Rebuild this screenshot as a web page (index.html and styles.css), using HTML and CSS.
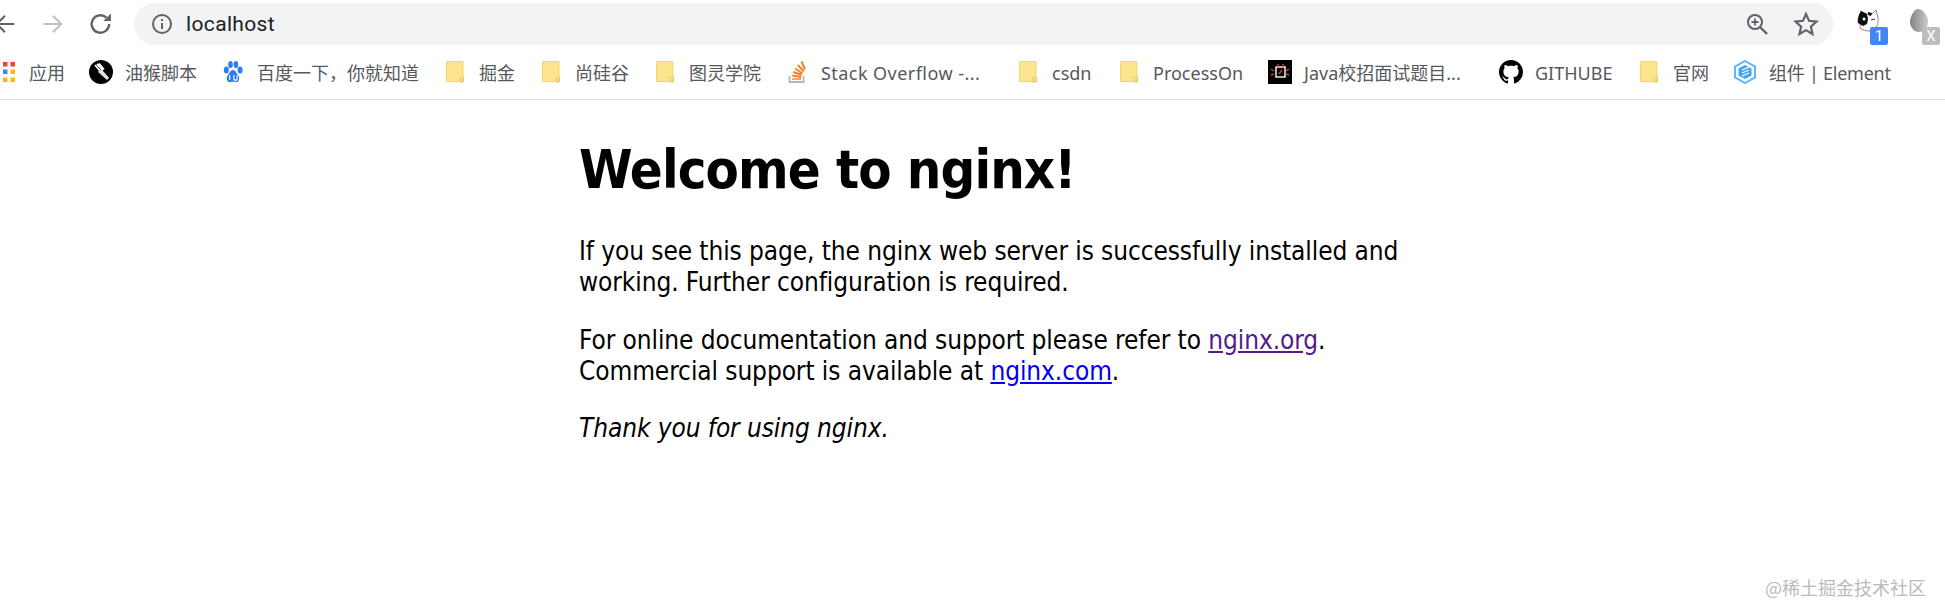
FILE: index.html
```html
<!DOCTYPE html>
<html lang="zh">
<head>
<meta charset="utf-8">
<title>Welcome to nginx!</title>
<link rel="stylesheet" href="styles.css">
</head>
<body>
<header class="chrome">
  <div class="toolbar">
    <svg class="nav nav-back" viewBox="0 0 24 24"><path d="M20 12H5M12 5l-7 7 7 7" fill="none" stroke="#5f6368" stroke-width="1.8"/></svg>
    <svg class="nav nav-forward" viewBox="0 0 24 24"><path d="M4 12h15M12 5l7 7-7 7" fill="none" stroke="#bdc1c6" stroke-width="1.8"/></svg>
    <svg class="nav nav-reload" viewBox="0 0 24 24"><path d="M19 12a7.5 7.5 0 1 1-2.3-5.4" fill="none" stroke="#5f6368" stroke-width="2"/><path d="M20.5 3v6.5H14z" fill="#5f6368"/></svg>
    <div class="omnibox">
      <svg class="info" viewBox="0 0 24 24"><circle cx="12" cy="12" r="9" fill="none" stroke="#5f6368" stroke-width="2"/><path d="M11 11h2v6h-2zM11 7h2v2h-2z" fill="#5f6368"/></svg>
      <span class="url">localhost</span>
      <svg class="zoom" viewBox="0 0 24 24"><circle cx="10" cy="10" r="7" fill="none" stroke="#5f6368" stroke-width="2"/><path d="M15 15l7 7" stroke="#5f6368" stroke-width="2.4"/><path d="M10 6.500v7M6.500 10h7" stroke="#5f6368" stroke-width="1.800"/></svg>
      <svg class="star" viewBox="0 0 24 24"><path d="M12 2.800l2.800 6.300 6.900.7-5.200 4.600 1.500 6.800-6-3.500-6 3.500 1.500-6.800-5.200-4.600 6.900-.7z" fill="none" stroke="#5f6368" stroke-width="2"/></svg>
    </div>
    <div class="ext ext-cat">
      <svg class="ext-icon" viewBox="0 0 24 26"><path d="M5 3l5 3c2-.5 4-.5 6 0l4-4 2 8c1 6-2 13-9 13-3 0-6-1-9-3 1-2 0-4-1-6 0-4 1-8 2-11z" fill="#fff" stroke="#8a8a8a" stroke-width="1"/><path d="M5 3l6 3 1 5-1 5-4 2-5-3c-1-4 1-9 3-12z" fill="#111"/><path d="M12 4l4 1-1 3-3-1z" fill="#111"/><circle cx="8" cy="11" r="1.500" fill="#fff"/><path d="M15 12l4-1" stroke="#333" stroke-width="1"/></svg>
      <span class="badge badge-blue">1</span>
    </div>
    <div class="ext ext-egg">
      <svg class="ext-icon" viewBox="0 0 24 26"><defs><linearGradient id="egg" x1="0" x2="1" y1="0" y2="0"><stop offset="0" stop-color="#7f8584"/><stop offset="1" stop-color="#c9cccb"/></linearGradient></defs><path d="M10 1c5 0 11 8 10 14-1 6-5 9-9 9-5 0-9-5-9-10 0-5 4-13 8-13z" fill="url(#egg)"/></svg>
      <span class="badge badge-gray">X</span>
    </div>
  </div>
  <nav class="bookmarks">
    <a class="bm bm-apps"><svg class="ic-apps" viewBox="0 0 12 20"><g><rect width="4.500" height="4.500" x="0" y="0" fill="#ea4335"/><rect width="4.500" height="4.500" x="7.500" y="0" fill="#ea4335"/><rect width="4.500" height="4.500" x="0" y="7.500" fill="#4285f4"/><rect width="4.500" height="4.500" x="7.500" y="7.500" fill="#fbbc05"/><rect width="4.500" height="4.500" x="0" y="15.500" fill="#fbbc05"/><rect width="4.500" height="4.500" x="7.500" y="15.500" fill="#fbbc05"/></g></svg><span>应用</span></a>
    <a class="bm w-monkey"><svg class="ic" viewBox="0 0 24 24"><circle cx="12" cy="12" r="12" fill="#000"/><path d="M6 5l6 7M8 4l6 6M10 3.500l5 6M12 10l7 8" stroke="#fff" stroke-width="1.800"/><path d="M11 9l9 9-2 2-9-8z" fill="#ddd"/></svg><span>油猴脚本</span></a>
    <a class="bm w-baidu"><svg class="ic ic-baidu" viewBox="0 0 24 24" preserveAspectRatio="none"><g fill="#2f7bf0"><ellipse cx="4" cy="10" rx="3" ry="3.600"/><ellipse cx="9" cy="4.500" rx="2.800" ry="3.500"/><ellipse cx="15.500" cy="4.500" rx="2.800" ry="3.500"/><ellipse cx="20.500" cy="10" rx="3" ry="3.600"/><path d="M12 10c3 0 4 3 6 5 3 3 1 8-3 7-2-.5-4-.5-6 0-4 1-6-4-3-7 2-2 3-5 6-5z"/></g><path d="M8 15v5M13 15v3c0 3 4 3 4 0v-3" fill="none" stroke="#fff" stroke-width="1.300"/></svg><span>百度一下，你就知道</span></a>
    <a class="bm w-juejin"><svg class="ic-folder" viewBox="0 0 18 24" preserveAspectRatio="none"><path d="M1 .500h15a1 1 0 0 1 1 1v21H1a.500.500 0 0 1-.500-.500V1A.500.500 0 0 1 1 .500z" fill="#fde58f" stroke="#f5d36a"/><rect x="14" y="18" width="3.500" height="5" rx="1" fill="none" stroke="#eebf4a"/></svg><span>掘金</span></a>
    <a class="bm w-atguigu"><svg class="ic-folder" viewBox="0 0 18 24" preserveAspectRatio="none"><path d="M1 .500h15a1 1 0 0 1 1 1v21H1a.500.500 0 0 1-.500-.500V1A.500.500 0 0 1 1 .500z" fill="#fde58f" stroke="#f5d36a"/><rect x="14" y="18" width="3.500" height="5" rx="1" fill="none" stroke="#eebf4a"/></svg><span>尚硅谷</span></a>
    <a class="bm w-tuling"><svg class="ic-folder" viewBox="0 0 18 24" preserveAspectRatio="none"><path d="M1 .500h15a1 1 0 0 1 1 1v21H1a.500.500 0 0 1-.500-.500V1A.500.500 0 0 1 1 .500z" fill="#fde58f" stroke="#f5d36a"/><rect x="14" y="18" width="3.500" height="5" rx="1" fill="none" stroke="#eebf4a"/></svg><span>图灵学院</span></a>
    <a class="bm w-so"><svg class="ic-so" viewBox="0 0 18 24"><path d="M1.500 16v6h14v-6" fill="none" stroke="#b4b6b8" stroke-width="1.800"/><path d="M4 19h9" stroke="#f7a26a" stroke-width="2"/><path d="M4.300 15.500l8.800 1.600M5.200 12l8.500 3M7 8.500l7.500 5M9.800 5l6 6.500M13.500 1.500l3.500 8" stroke="#f48024" stroke-width="2"/></svg><span class="wide">Stack Overflow -...</span></a>
    <a class="bm w-csdn"><svg class="ic-folder" viewBox="0 0 18 24" preserveAspectRatio="none"><path d="M1 .500h15a1 1 0 0 1 1 1v21H1a.500.500 0 0 1-.500-.500V1A.500.500 0 0 1 1 .500z" fill="#fde58f" stroke="#f5d36a"/><rect x="14" y="18" width="3.500" height="5" rx="1" fill="none" stroke="#eebf4a"/></svg><span>csdn</span></a>
    <a class="bm w-process"><svg class="ic-folder" viewBox="0 0 18 24" preserveAspectRatio="none"><path d="M1 .500h15a1 1 0 0 1 1 1v21H1a.500.500 0 0 1-.500-.500V1A.500.500 0 0 1 1 .500z" fill="#fde58f" stroke="#f5d36a"/><rect x="14" y="18" width="3.500" height="5" rx="1" fill="none" stroke="#eebf4a"/></svg><span>ProcessOn</span></a>
    <a class="bm w-java"><svg class="ic" viewBox="0 0 24 24"><rect width="24" height="24" fill="#000"/><rect x="8" y="7" width="9" height="10" fill="none" stroke="#eee" stroke-width="1.500"/><path d="M10 4v3M15 4v3M3 9l3 2M3 15l3-1M21 9l-3 2M21 15l-3-1" stroke="#c8402c" stroke-width="1.500"/><path d="M11 14l3-4" stroke="#c8402c" stroke-width="1.500"/></svg><span>Java校招面试题目...</span></a>
    <a class="bm w-github"><svg class="ic" viewBox="0 0 16 16"><path fill="#000" d="M8 0C3.580 0 0 3.580 0 8c0 3.540 2.290 6.530 5.470 7.590.4.070.55-.17.55-.38 0-.19-.01-.82-.01-1.490-2.010.37-2.530-.49-2.690-.94-.09-.23-.48-.94-.82-1.130-.28-.15-.68-.52-.01-.53.63-.01 1.080.58 1.230.82.720 1.210 1.870.87 2.330.66.070-.52.280-.87.510-1.070-1.780-.2-3.640-.89-3.640-3.950 0-.87.310-1.590.82-2.150-.08-.2-.36-1.020.08-2.120 0 0 .67-.21 2.200.82.640-.18 1.320-.27 2-.27s1.360.09 2 .27c1.530-1.040 2.200-.82 2.200-.82.440 1.100.16 1.920.08 2.120.51.560.82 1.270.82 2.150 0 3.070-1.870 3.750-3.650 3.950.29.250.54.730.54 1.480 0 1.070-.01 1.930-.01 2.200 0 .21.150.46.550.38A8.010 8.010 0 0 0 16 8c0-4.420-3.580-8-8-8z"/></svg><span>GITHUBE</span></a>
    <a class="bm w-guanwang"><svg class="ic-folder" viewBox="0 0 18 24" preserveAspectRatio="none"><path d="M1 .500h15a1 1 0 0 1 1 1v21H1a.500.500 0 0 1-.500-.500V1A.500.500 0 0 1 1 .500z" fill="#fde58f" stroke="#f5d36a"/><rect x="14" y="18" width="3.500" height="5" rx="1" fill="none" stroke="#eebf4a"/></svg><span>官网</span></a>
    <a class="bm w-element"><svg class="ic" viewBox="0 0 24 24"><path d="M12 1l10 5.700v10.600L12 23 2 17.300V6.700z" fill="#fff" stroke="#5cb6ff" stroke-width="2"/><path d="M12 5l6.500 3.500v7L12 19l-6.500-3.500v-7z" fill="#3fa4f5"/><path d="M9 10l7-3M9 13l7-3M9 16l7-3" stroke="#fff" stroke-width="1.300"/></svg><span class="tight">组件 | Element</span></a>
  </nav>
</header>
<main class="page">
  <h1>Welcome to nginx!</h1>
  <p>If you see this page, the nginx web server is successfully installed and<br>working. Further configuration is required.</p>
  <p>For online documentation and support please refer to <a class="visited" href="#">nginx.org</a>.<br>Commercial support is available at <a class="fresh" href="#">nginx.com</a>.</p>
  <p><em>Thank you for using nginx.</em></p>
</main>
<div class="watermark">@稀土掘金技术社区</div>
</body>
</html>
```
FILE: styles.css
```css
html, body { margin: 0; padding: 0; background: #fff; }
body { width: 1945px; height: 615px; overflow: hidden; position: relative; }

.chrome { height: 100px; box-sizing: border-box; border-bottom: 1px solid #dadce0; }

.toolbar { display: flex; align-items: center; height: 45px; padding-top: 3px; box-sizing: border-box; }
.nav { width: 28px; height: 28px; flex: none; }
.nav-back { margin-left: -9px; }
.nav-forward { margin-left: 20px; }
.nav-reload { margin-left: 20px; }

.omnibox {
  flex: none; display: flex; align-items: center;
  width: 1699px; height: 42px; margin-left: 19px;
  padding: 0 14px 0 16px; box-sizing: border-box;
  background: #f1f3f4; border-radius: 21px;
}
.info { width: 24px; height: 24px; flex: none; }
.url { margin-left: 12px; flex: 1; font: 21px/24px Roboto, "Noto Sans", sans-serif; color: #202124; letter-spacing: .35px; }
.zoom { width: 24px; height: 24px; flex: none; }
.star { width: 26px; height: 26px; flex: none; margin-left: 24px; }

.ext { position: relative; width: 32px; height: 32px; flex: none; }
.ext-cat { margin-left: 23px; }
.ext-egg { margin-left: 20px; }
.ext-icon { width: 24px; height: 26px; }
.badge {
  position: absolute; right: 0; bottom: -5px; width: 18px; height: 18px; border-radius: 2px;
  color: #fff; font: 15px/18px Roboto, sans-serif; text-align: center;
}
.badge-blue { background: #4285f4; }
.badge-gray { background: #bdbdbd; }

.bookmarks { display: flex; align-items: center; height: 54px; padding-left: 3px; box-sizing: border-box; }
.bm {
  display: flex; align-items: center; flex: none;
  font: 18px/24px "Noto Sans", "Noto Sans CJK SC", sans-serif; color: #55585d; white-space: nowrap;
}
.bm span { margin-top: 2px; }
.wide { letter-spacing: .45px; }
.tight { letter-spacing: -.25px; }
.ic { width: 24px; height: 24px; margin-right: 12px; flex: none; }
.ic-baidu { width: 20px; margin-right: 14px; }
.ic-apps { width: 12px; height: 20px; margin-right: 14px; flex: none; }
.ic-folder { width: 18px; height: 22px; margin-right: 15px; flex: none; }
.ic-so { width: 18px; height: 24px; margin-right: 15px; flex: none; }

.bm-apps { width: 86px; }
.w-monkey { width: 134px; }
.w-baidu { width: 223px; }
.w-juejin { width: 96px; }
.w-atguigu { width: 114px; }
.w-tuling { width: 132px; }
.w-so { width: 231px; }
.w-csdn { width: 101px; }
.w-process { width: 148px; }
.w-java { width: 231px; }
.w-github { width: 141px; }
.w-guanwang { width: 93px; }
.w-element { width: 160px; }

.page { width: 820px; margin-left: 579px; font-family: "DejaVu Sans Condensed", "DejaVu Sans", sans-serif; font-size: 26px; line-height: 31px; letter-spacing: -.09px; color: #000; }
.page h1 { margin: 38px 0 34px; font-size: 54px; line-height: 64px; font-weight: 700; letter-spacing: -.88px; white-space: nowrap; }
.page p { margin: 0 0 26.5px; white-space: nowrap; }
.visited { color: #551a8b; }
.fresh { color: #0000ee; }

.watermark { position: absolute; right: 19px; bottom: 16px; font: 18px/24px "Noto Sans CJK SC", sans-serif; color: #bbb; }
```
